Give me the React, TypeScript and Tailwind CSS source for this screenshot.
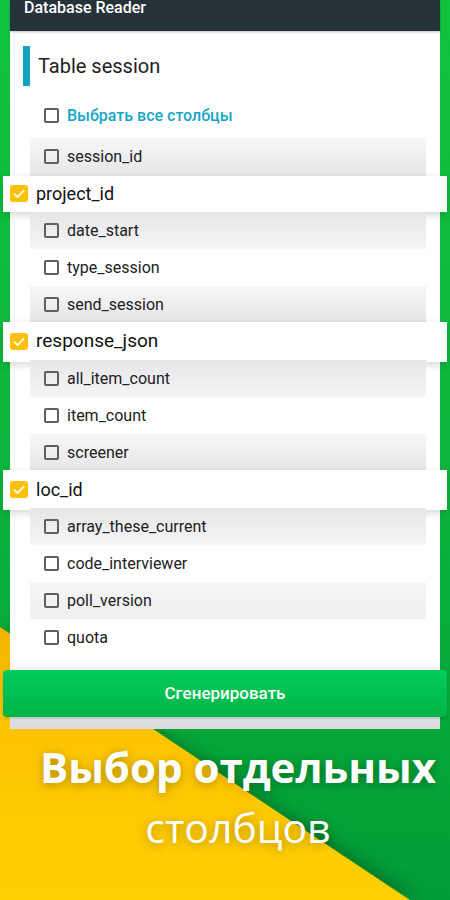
import React from 'react';

type Row = { name: string; bg: 'top' | 'bottom' | 'flat' | 'none' | 'under'; hl?: boolean; tall?: boolean };

const rows: Row[] = [
  { name: 'session_id', bg: 'top' },
  { name: 'project_id', bg: 'under', hl: true },
  { name: 'date_start', bg: 'bottom' },
  { name: 'type_session', bg: 'none' },
  { name: 'send_session', bg: 'top' },
  { name: 'response_json', bg: 'under', hl: true, tall: true },
  { name: 'all_item_count', bg: 'bottom' },
  { name: 'item_count', bg: 'none' },
  { name: 'screener', bg: 'top' },
  { name: 'loc_id', bg: 'under', hl: true, tall: true },
  { name: 'array_these_current', bg: 'bottom' },
  { name: 'code_interviewer', bg: 'none' },
  { name: 'poll_version', bg: 'flat' },
  { name: 'quota', bg: 'none' },
];

const bgClass: Record<Row['bg'], string> = {
  top: 'bg-gradient-to-b from-[#f7f7f8] to-[#e6e6e9]',
  bottom: 'bg-gradient-to-b from-[#e6e6e9] to-[#f5f5f6]',
  under: 'bg-[#e6e6e9]',
  flat: 'bg-gradient-to-b from-[#f6f6f7] to-[#efeff1]',
  none: 'bg-white',
};

function EmptyBox() {
  return <span className="block w-[15px] h-[15px] border-2 border-[#5f5f5f] rounded-[2px] shrink-0" />;
}

function YellowBox() {
  return (
    <span className="flex items-center justify-center w-[18px] h-[17px] rounded-[3px] bg-[#ffc107] shrink-0">
      <svg width="12" height="10" viewBox="0 0 12 10" fill="none">
        <path d="M1.5 5.2 L4.6 8 L10.5 1.8" stroke="white" strokeWidth="1.8" strokeLinecap="round" strokeLinejoin="round" />
      </svg>
    </span>
  );
}

export default function App() {
  return (
    <div className="relative w-[450px] h-[900px] overflow-hidden bg-gradient-to-b from-[#10c23e] via-[#0cb53b] to-[#029d38] font-['Roboto',sans-serif]">
      {/* фон: жёлтый клин */}
      <svg className="absolute inset-0" width="450" height="900" viewBox="0 0 450 900">
        <defs>
          <filter id="blur" x="-20%" y="-20%" width="140%" height="140%">
            <feGaussianBlur stdDeviation="9" />
          </filter>
          <linearGradient id="yel" x1="0" y1="0" x2="0" y2="1">
            <stop offset="0" stopColor="#f4b400" />
            <stop offset="0.35" stopColor="#fcc300" />
            <stop offset="1" stopColor="#ffcf00" />
          </linearGradient>
        </defs>
        <polygon points="0,630 418,900 0,900" fill="#00451a" opacity="0.55" filter="url(#blur)" />
        <polygon points="0,627 410,900 0,900" fill="url(#yel)" />
      </svg>

      <div className="relative flex flex-col">
        {/* карточка */}
        <div className="mx-[10px] h-[729px] bg-white flex flex-col">
          <div className="h-[31px] bg-[#253238] px-[14px] shadow-[0_1px_2px_rgba(0,0,0,0.25)]">
            <span className="block text-[16px] leading-[16px] font-medium text-white">Database Reader</span>
          </div>

          <div className="flex items-center gap-[8px] pl-[13px] mt-[15px] h-[40px]">
            <span className="block w-[7px] h-[40px] bg-[#12a3c0]" />
            <span className="text-[20px] text-[#212121]">Table session</span>
          </div>

          <div className="mx-[20px] mr-[14px] mt-[11px] flex flex-col">
            <div className="h-[37px] flex items-center pl-[14px] gap-[8px] mb-[4px]">
              <EmptyBox />
              <span className="text-[16px] font-medium text-[#14a6c6]">Выбрать все столбцы</span>
            </div>

            {rows.map((r) => (
              <div key={r.name} className={`h-[37px] flex items-center ${bgClass[r.bg]}`}>
                {r.hl ? (
                  <div
                    className={`ml-[-27px] mr-[-21px] flex-1 flex items-center gap-[8px] pl-[7px] bg-white shadow-[0_3px_8px_rgba(0,0,0,0.16)] ${r.tall ? 'h-[40px]' : 'h-[36px]'}`}
                  >
                    <YellowBox />
                    <span className={`${r.name === 'response_json' ? 'text-[19px]' : 'text-[18px]'} text-[#111]`}>{r.name}</span>
                  </div>
                ) : (
                  <div className="flex items-center pl-[14px] gap-[8px]">
                    <EmptyBox />
                    <span className="text-[16px] text-[#212121]">{r.name}</span>
                  </div>
                )}
              </div>
            ))}
          </div>

          <div className="flex-1 bg-gradient-to-b from-white to-[#dbdbdf] pt-[14px]">
            <button className="ml-[-7px] mr-[-5px] w-[444px] h-[47px] rounded-[4px] bg-gradient-to-b from-[#04cc5c] to-[#00b447] shadow-[0_1px_3px_rgba(0,0,0,0.2)] text-white text-[17px] font-medium">
              Сгенерировать
            </button>
          </div>
        </div>

        {/* подпись */}
        <div className="mt-[8px] pl-[26px] flex flex-col items-center text-white font-['Open_Sans',sans-serif] [text-shadow:0_2px_10px_rgba(0,0,0,0.3)]">
          <span className="text-[42px] leading-[60px] font-bold">Выбор отдельных</span>
          <span className="text-[41px] leading-[60px]">столбцов</span>
        </div>
      </div>
    </div>
  );
}
